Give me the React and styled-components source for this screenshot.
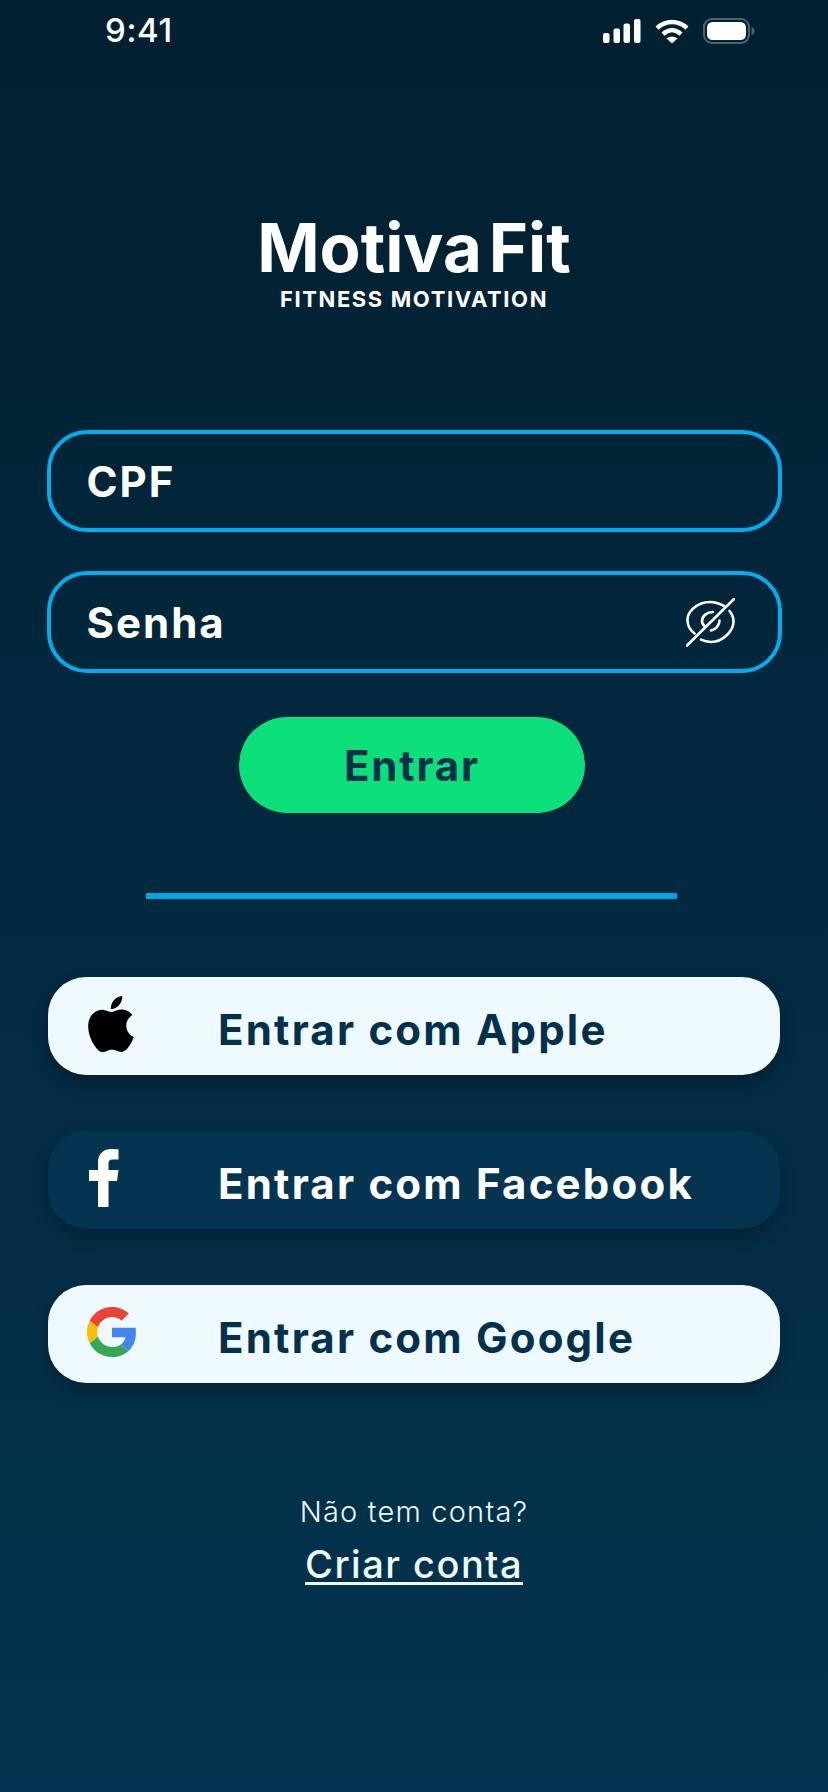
import React from 'react';
import styled, { createGlobalStyle } from 'styled-components';
import { SiApple } from 'react-icons/si';

const GlobalStyle = createGlobalStyle`
  html, body {
    margin: 0;
    padding: 0;
  }
  body {
    font-family: Inter, "Liberation Sans", sans-serif;
  }
`;

const Page = styled.div`
  box-sizing: border-box;
  width: 828px;
  height: 1792px;
  overflow: hidden;
  display: flex;
  flex-direction: column;
  align-items: center;
  background: linear-gradient(180deg, #021f30 0%, #04344f 100%);
  color: #fff;
`;

const StatusBar = styled.div`
  box-sizing: border-box;
  width: 100%;
  height: 60px;
  display: flex;
  align-items: flex-start;
  justify-content: space-between;
  padding: 11px 73px 0 105px;
`;

const Clock = styled.span`
  font-size: 33px;
  line-height: 38px;
  letter-spacing: 0.6px;
  font-weight: 500;
`;

const StatusIcons = styled.div`
  display: flex;
  align-items: center;
  gap: 14px;
  padding-top: 7px;
`;

const Logo = styled.div`
  margin-top: 152px;
  display: flex;
  flex-direction: column;
  align-items: center;
`;

const LogoWord = styled.div`
  display: flex;
  gap: 7px;
  font-size: 67px;
  line-height: 72px;
  font-weight: 700;
  letter-spacing: 0;
`;

const LogoTag = styled.div`
  margin-top: 2px;
  font-size: 22px;
  line-height: 26px;
  font-weight: 700;
  letter-spacing: 1.6px;
`;

const Form = styled.div`
  margin-top: 118px;
  width: 735px;
  display: flex;
  flex-direction: column;
  gap: 39px;
`;

const Field = styled.div`
  box-sizing: border-box;
  height: 102px;
  border: 4px solid #00aeef;
  border-radius: 40px;
  padding: 0 43px 0 36px;
  display: flex;
  align-items: center;
  justify-content: space-between;
`;

const FieldLabel = styled.span`
  font-size: 42px;
  font-weight: 700;
  letter-spacing: 2px;
`;

const SubmitButton = styled.button`
  margin: 44px 4px 0 0;
  width: 346px;
  height: 96px;
  border: 0;
  border-radius: 48px;
  background: #0be07a;
  color: #03314c;
  font-family: inherit;
  font-size: 42px;
  font-weight: 700;
  letter-spacing: 1.8px;
`;

const Divider = styled.div`
  margin: 80px 5px 0 0;
  width: 531px;
  height: 6px;
  background: #00a5e6;
`;

const SocialList = styled.div`
  margin-top: 78px;
  width: 732px;
  display: flex;
  flex-direction: column;
  gap: 56px;
`;

const SocialButton = styled.button`
  width: 100%;
  height: 98px;
  border: 0;
  border-radius: 38px;
  padding: 0;
  display: flex;
  align-items: center;
  background: ${props => (props.$dark ? '#04344f' : '#eefaff')};
  color: ${props => (props.$dark ? '#ffffff' : '#03314c')};
  box-shadow: 0 8px 16px rgba(0, 0, 0, 0.25);
  font-family: inherit;
  font-size: 42px;
  font-weight: 700;
  letter-spacing: 2.2px;
`;

const SocialIcon = styled.span`
  flex: 0 0 170px;
  box-sizing: border-box;
  padding-left: ${props => props.$inset}px;
  display: flex;
  align-items: center;
  justify-content: flex-start;
  margin-top: -4px;
`;

const SocialLabel = styled.span`
  padding-top: 7px;
`;

const Signup = styled.div`
  margin-top: 111px;
  display: flex;
  flex-direction: column;
  align-items: center;
`;

const SignupHint = styled.span`
  font-size: 29px;
  line-height: 36px;
  font-weight: 300;
  letter-spacing: 1.2px;
  color: #eefaf6;
`;

const SignupLink = styled.a`
  margin-top: 16px;
  font-size: 38px;
  line-height: 36px;
  font-weight: 500;
  letter-spacing: 1.5px;
  color: #eefaf6;
  border-bottom: 3px solid #eefaf6;
`;

function SignalIcon() {
  return (
    <svg width="38" height="24" viewBox="0 0 38 24" fill="#fff">
      <rect x="0" y="14" width="6.5" height="10" rx="2" />
      <rect x="10.5" y="9.5" width="6.5" height="14.5" rx="2" />
      <rect x="20.5" y="4.5" width="6.5" height="19.5" rx="2" />
      <rect x="31" y="0" width="6.5" height="24" rx="2" />
    </svg>
  );
}

function WifiIcon() {
  return (
    <svg width="34" height="25" viewBox="0 0 34 25" fill="none" stroke="#fff" strokeWidth="4.4">
      <path d="M2 9.2 C10.5 1 23.5 1 32 9.2" />
      <path d="M8 15.2 C13.5 10 20.5 10 26 15.2" />
      <path d="M17 24.5 L11.5 19.6 C14.5 16.8 19.5 16.8 22.5 19.6 Z" fill="#fff" stroke="none" />
    </svg>
  );
}

function BatteryIcon() {
  return (
    <svg width="52" height="26" viewBox="0 0 52 26">
      <rect x="1" y="1" width="45" height="24" rx="8" fill="none" stroke="#4d6473" strokeWidth="2" />
      <rect x="4" y="4" width="39" height="18" rx="5.5" fill="#fff" />
      <path d="M48.5 9 C50.5 9.6 51.5 11 51.5 13 C51.5 15 50.5 16.4 48.5 17 Z" fill="#4d6473" />
    </svg>
  );
}

function HiddenEyeIcon() {
  return (
    <svg width="49" height="49" viewBox="0 0 49 49" fill="none" stroke="#fff" strokeWidth="2.6" strokeLinecap="round">
      <path d="M38 8 C33 5.2 28.5 4 24 4 C11 4 1 14 1.5 22.5 C1.5 27.5 4 32 8.5 35.5" />
      <path d="M43.5 13 C46 16 47.5 19.5 47.5 23.5 C47.5 33 37 44 25 44 C21.5 44 18 43.2 15 41.7" />
      <path d="M27 14 C21 14 16 18 16 23 C16 25 17 27 19 28.5" />
      <path d="M33.5 22.5 C33.5 27 30 31.5 25 32.5" />
      <path d="M1 47.5 L48 1" />
    </svg>
  );
}

function FacebookIcon() {
  return (
    <svg width="30" height="58" viewBox="0 0 30 58" fill="#fff">
      <path d="M9 58 V32 H0 V21 H9 V13.5 C9 4.5 14.5 0 22.5 0 C25.5 0 28.5 0.3 29.5 0.5 V10.5 H24 C20 10.5 19.5 12.5 19.5 15.5 V21 H29.5 L28 32 H19.5 V58 Z" />
    </svg>
  );
}

function GoogleIcon() {
  return (
    <svg width="50" height="50" viewBox="0 0 48 48">
      <path fill="#EA4335" d="M24 9.5c3.54 0 6.71 1.22 9.21 3.6l6.85-6.85C35.9 2.38 30.47 0 24 0 14.62 0 6.51 5.38 2.56 13.22l7.98 6.19C12.43 13.72 17.74 9.5 24 9.5z" />
      <path fill="#4285F4" d="M46.98 24.55c0-1.57-.15-3.09-.38-4.55H24v9.02h12.94c-.58 2.96-2.26 5.48-4.78 7.18l7.73 6c4.51-4.18 7.09-10.36 7.09-17.65z" />
      <path fill="#FBBC05" d="M10.53 28.59c-.48-1.45-.76-2.99-.76-4.59s.27-3.14.76-4.59l-7.98-6.19C.92 16.46 0 20.12 0 24c0 3.88.92 7.54 2.56 10.78l7.97-6.19z" />
      <path fill="#34A853" d="M24 48c6.48 0 11.93-2.13 15.89-5.81l-7.73-6c-2.15 1.45-4.92 2.3-8.16 2.3-6.26 0-11.57-4.22-13.47-9.91l-7.98 6.19C6.51 42.62 14.62 48 24 48z" />
    </svg>
  );
}

function App() {
  return (
    <Page>
      <GlobalStyle />
      <StatusBar>
        <Clock>9:41</Clock>
        <StatusIcons>
          <SignalIcon />
          <WifiIcon />
          <BatteryIcon />
        </StatusIcons>
      </StatusBar>

      <Logo>
        <LogoWord>
          <span>Motiva</span>
          <span>Fit</span>
        </LogoWord>
        <LogoTag>FITNESS MOTIVATION</LogoTag>
      </Logo>

      <Form>
        <Field>
          <FieldLabel>CPF</FieldLabel>
        </Field>
        <Field>
          <FieldLabel>Senha</FieldLabel>
          <HiddenEyeIcon />
        </Field>
      </Form>

      <SubmitButton>Entrar</SubmitButton>
      <Divider />

      <SocialList>
        <SocialButton>
          <SocialIcon $inset={35}>
            <SiApple size={56} color="#000" />
          </SocialIcon>
          <SocialLabel>Entrar com Apple</SocialLabel>
        </SocialButton>
        <SocialButton $dark>
          <SocialIcon $inset={41}>
            <FacebookIcon />
          </SocialIcon>
          <SocialLabel>Entrar com Facebook</SocialLabel>
        </SocialButton>
        <SocialButton>
          <SocialIcon $inset={39}>
            <GoogleIcon />
          </SocialIcon>
          <SocialLabel>Entrar com Google</SocialLabel>
        </SocialButton>
      </SocialList>

      <Signup>
        <SignupHint>Não tem conta?</SignupHint>
        <SignupLink>Criar conta</SignupLink>
      </Signup>
    </Page>
  );
}

export default App;
